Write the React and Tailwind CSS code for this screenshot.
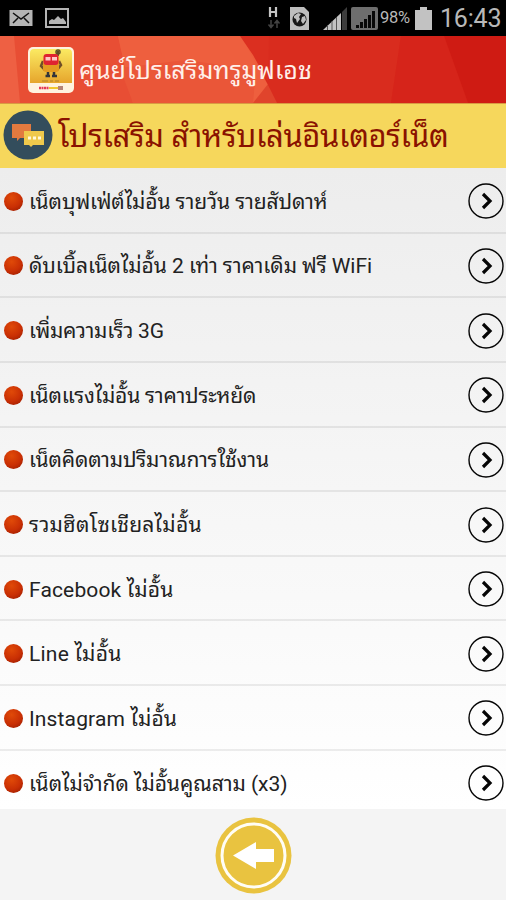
import React from 'react';

const items = [
  { text: 'เน็ตบุฟเฟ่ต์ไม่อั้น รายวัน รายสัปดาห์', tracking: 'tracking-[-0.08px]' },
  { text: 'ดับเบิ้ลเน็ตไม่อั้น 2 เท่า ราคาเดิม ฟรี WiFi', tracking: 'tracking-[-0.06px]' },
  { text: 'เพิ่มความเร็ว 3G', tracking: 'tracking-[-0.25px]' },
  { text: 'เน็ตแรงไม่อั้น ราคาประหยัด', tracking: 'tracking-[-0.18px]' },
  { text: 'เน็ตคิดตามปริมาณการใช้งาน', tracking: 'tracking-[-0.14px]' },
  { text: 'รวมฮิตโซเชียลไม่อั้น', tracking: 'tracking-[0.25px]' },
  { text: 'Facebook ไม่อั้น', tracking: 'tracking-[0.15px]' },
  { text: 'Line ไม่อั้น', tracking: 'tracking-[0.22px]' },
  { text: 'Instagram ไม่อั้น', tracking: 'tracking-[0.14px]' },
  { text: 'เน็ตไม่จำกัด ไม่อั้นคูณสาม (x3)', tracking: 'tracking-[-0.05px]' },
];

function StatusBar() {
  return (
    <div className="flex h-9 shrink-0 items-center bg-black text-[#b8b8b8]">
      <svg className="ml-[9px] h-[18px] w-6" viewBox="0 0 24 18">
        <rect x="0.5" y="1" width="23" height="16" fill="#b5b5b5" />
        <path d="M4 4l8 6 8-6M4 14l5-5M20 14l-5-5" fill="none" stroke="#111" strokeWidth="1.5" />
      </svg>
      <svg className="ml-3 h-5 w-6" viewBox="0 0 24 20">
        <rect x="1" y="1" width="22" height="18" fill="#050505" stroke="#b5b5b5" strokeWidth="2" />
        <path d="M4 16v-3l3-2 2 1 4-4 3 3 2-1 3 4v2z" fill="#b5b5b5" />
      </svg>
      <div className="flex-1" />
      <svg className="h-6 w-3.5" viewBox="0 0 14 24">
        <path d="M3 1v10M9 1v10M3 6h6" fill="none" stroke="#c4c4c4" strokeWidth="2.2" />
        <path d="M4 14v7M1.500 18.500L4 21.500l2.500-3M10 22v-7M7.500 17.500L10 14.500l2.500 3" fill="none" stroke="#444" strokeWidth="1.500" />
      </svg>
      <svg className="ml-[9px] h-[23px] w-[19px]" viewBox="0 0 19 23">
        <path d="M0 0h14l5 5v18H0z" fill="#bebebe" />
        <circle cx="9.500" cy="12.500" r="7" fill="#181818" />
        <path d="M4 9l4-3 3 1-2 3 1 2-3 4-1-4-2-1zM12 10l3-1 1 4-3 4-2-3z" fill="#bebebe" />
      </svg>
      <svg className="ml-[14px] h-[23px] w-6" viewBox="0 0 24 23">
        <path d="M0 23L18 6v17z" fill="#c2c2c2" />
        <path d="M4.500 18v5M9 14v9M13.500 10v13" stroke="#555" strokeWidth="1" />
        <path d="M19 5l5-5v23h-5z" fill="#3c3c3c" />
      </svg>
      <svg className="ml-1 h-[23px] w-[27px]" viewBox="0 0 27 23">
        <rect width="27" height="23" rx="2" fill="#6e6e6e" />
        <path d="M6.500 21v-3M10.500 21v-6M14.500 21v-9M18.500 21V8M22.500 21V4" stroke="#080808" strokeWidth="3" />
      </svg>
      <span className="ml-[2px] w-8 whitespace-nowrap font-['Roboto',sans-serif] text-[16.5px] leading-none tracking-[-0.3px]">98%</span>
      <svg className="ml-[3px] h-[23px] w-[17px]" viewBox="0 0 17 23">
        <path d="M5 0h7v3h5v20H0V3h5z" fill="#c2c2c2" />
      </svg>
      <span className="ml-2 mr-1 w-[62px] whitespace-nowrap font-['Roboto',sans-serif] text-[25px] leading-none tracking-[-0.2px]">16:43</span>
    </div>
  );
}

function AppLogo() {
  return (
    <svg className="h-[46px] w-[46px] shrink-0" viewBox="0 0 46 46">
      <defs>
        <linearGradient id="gold" x1="0" y1="0" x2="0" y2="1">
          <stop offset="0" stopColor="#fbea62" />
          <stop offset="1" stopColor="#e6a52c" />
        </linearGradient>
      </defs>
      <rect width="46" height="46" rx="5" fill="#fff3df" />
      <path d="M2 6q0-4 4-4h34q4 0 4 4v30H2z" fill="url(#gold)" />
      <path d="M27 9l3-1V4" fill="none" stroke="#5c5127" strokeWidth="2" />
      <circle cx="30" cy="5" r="2" fill="none" stroke="#5c5127" strokeWidth="1.500" />
      <path d="M15 14l-2 5 4 4M31 14l2 4-4 5" fill="none" stroke="#704e27" strokeWidth="2.500" />
      <rect x="15" y="12" width="16" height="13" rx="3" fill="#e49b20" />
      <rect x="15.500" y="7" width="15" height="11" rx="3" fill="#df2330" />
      <path d="M17.500 10h5v3.500h-5zM24 10h5v3.500h-5z" fill="#ffc6c2" />
      <path d="M20 25v4M26 25v4M17.500 29h4.500M24 29h5" stroke="#34353a" strokeWidth="2.500" />
      <path d="M14 34h6M22 34h3M27 34h4" stroke="#8b6928" strokeWidth="1.200" opacity=".6" />
      <path d="M11 41h10" stroke="#e33a57" strokeWidth="2.500" strokeDasharray="2 .5" />
      <path d="M21 41h9" stroke="#f1c72e" strokeWidth="2" />
      <path d="M30 39h5v4h-5z" fill="#b48376" />
    </svg>
  );
}

function Header() {
  return (
    <header className="relative flex h-[67px] shrink-0 items-center bg-[#d92b1d] pl-7">
      <svg className="absolute inset-0 h-[67px] w-full" viewBox="0 0 506 67" preserveAspectRatio="none">
        <path d="M0 0h260v67H0z" fill="#ee5c3b" />
        <path d="M0 0h30L20 67H0z" fill="#ee6043" />
        <path d="M14 0h104l15 67H20z" fill="#e84e34" />
        <path d="M118 0h123l37 67H133z" fill="#ee5f3e" />
        <path d="M120 32l66-8 70 10-3 33H133z" fill="#ea5638" />
        <path d="M240 0h30v50l-17-31z" fill="#db2f20" />
        <path d="M268 48l10 19h-25z" fill="#e0442c" />
        <path d="M269 0h132l-10 67H277l-9-18z" fill="#d92c1e" />
        <path d="M401 0h43l24 67h-77z" fill="#d6241a" />
        <path d="M444 0h62v67h-38z" fill="#cf1b13" />
      </svg>
      <div className="relative flex items-center">
        <AppLogo />
        <h1 className="-mt-[3px] ml-[5px] whitespace-nowrap font-['Droid_Sans_Thai','Noto_Sans_Thai_Looped','Loma','Waree','Noto_Sans',sans-serif] text-[25px] leading-none tracking-[0.02px] text-[#fff0ea]">ศูนย์โปรเสริมทรูมูฟเอช</h1>
      </div>
    </header>
  );
}

function SectionTitle() {
  return (
    <div className="flex h-[65px] shrink-0 items-center border-t border-[#d99b42] bg-[#f6d75c] pl-[3px]">
      <svg className="-mt-[2px] h-[50px] w-[50px] shrink-0" viewBox="0 0 50 50">
        <circle cx="25" cy="25" r="24.500" fill="#334d5c" />
        <path d="M9 14h19v14H17l-3 3v-3H9z" fill="#e27a3f" />
        <path d="M21 21h20v14H30l-2 2-2-2h-5z" fill="#efc94c" />
        <path d="M25 28h3M30 28h3M35 28h3" stroke="#fff8dc" strokeWidth="3" />
      </svg>
      <h2 className="-mt-[6px] ml-[5px] whitespace-nowrap font-['Droid_Sans_Thai','Noto_Sans_Thai_Looped','Loma','Waree','Noto_Sans',sans-serif] text-[31px] leading-none tracking-[-0.36px] text-[#8a1200]">โปรเสริม สำหรับเล่นอินเตอร์เน็ต</h2>
    </div>
  );
}

function Row({ item }) {
  return (
    <li className="flex h-[64.65px] shrink-0 items-center border-b-2 border-black/[0.07] pl-1 pr-[2px] pt-[2px]">
      <span className="h-[19px] w-[19px] shrink-0 rounded-full bg-[radial-gradient(circle_at_40%_30%,#e04a08,#c92f04_55%,#8f1800)]" />
      <span className={`ml-[6px] mt-[2px] flex-1 whitespace-nowrap font-['Roboto','Droid_Sans_Thai','Noto_Sans_Thai_Looped','Loma','Waree','Noto_Sans',sans-serif] text-[21px] leading-none text-[#222] ${item.tracking}`}>{item.text}</span>
      <svg className="h-9 w-9 shrink-0" viewBox="0 0 36 36" fill="none" stroke="#050505">
        <circle cx="18" cy="18" r="17" strokeWidth="1.400" />
        <path d="M15 11l7 7-7 7" strokeWidth="3.200" />
      </svg>
    </li>
  );
}

export default function App() {
  return (
    <div className="flex h-[900px] w-[506px] flex-col overflow-hidden bg-[#f4f4f4]">
      <StatusBar />
      <Header />
      <SectionTitle />
      <ul className="flex h-[641px] shrink-0 flex-col overflow-hidden bg-linear-to-b from-[#ededed] to-white pt-[1px]">
        {items.map((item) => <Row key={item.text} item={item} />)}
      </ul>
      <footer className="flex flex-1 items-center justify-center pt-[2px]">
        <svg className="h-[77px] w-[77px]" viewBox="0 0 77 77">
          <circle cx="38.500" cy="38.500" r="38" fill="#e9c340" />
          <circle cx="38.500" cy="38.500" r="31.500" fill="none" stroke="#fffdf5" strokeWidth="3" />
          <path d="M18 38.500L41 25v7h18v13H41v7z" fill="#fff" />
        </svg>
      </footer>
    </div>
  );
}
